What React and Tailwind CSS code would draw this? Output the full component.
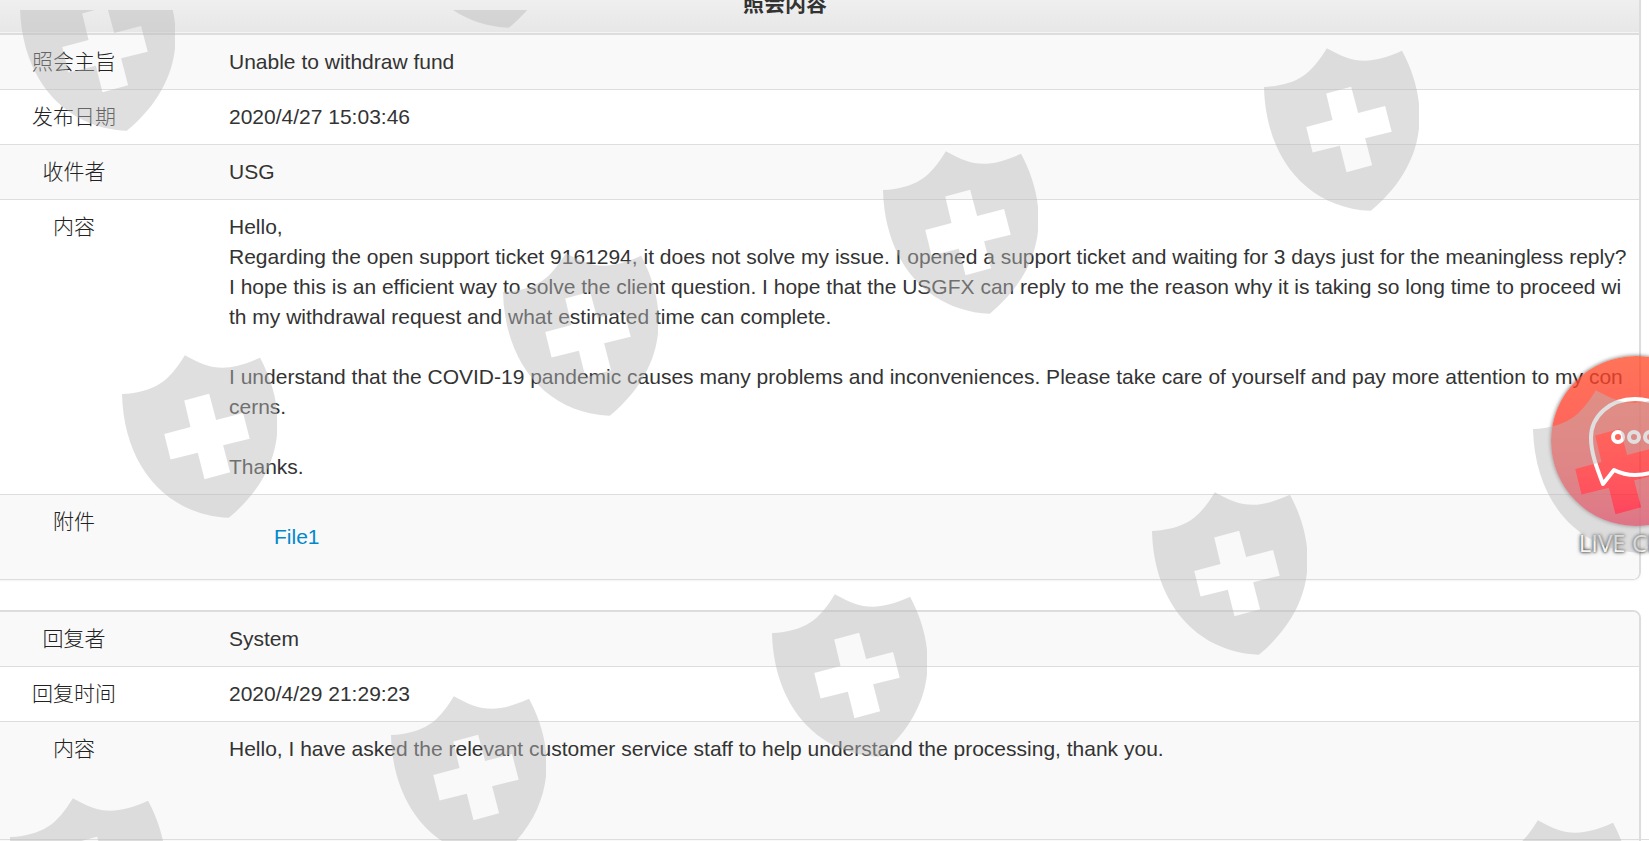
const ticketRows = [
  { label: '照会主旨', value: 'Unable to withdraw fund' },
  { label: '发布日期', value: '2020/4/27 15:03:46' },
  { label: '收件者', value: 'USG' },
  {
    label: '内容',
    value: `Hello,
Regarding the open support ticket 9161294, it does not solve my issue. I opened a support ticket and waiting for 3 days just for the meaningless reply? I hope this is an efficient way to solve the client question. I hope that the USGFX can reply to me the reason why it is taking so long time to proceed with my withdrawal request and what estimated time can complete.

I understand that the COVID-19 pandemic causes many problems and inconveniences. Please take care of yourself and pay more attention to my concerns.

Thanks.`,
  },
  { label: '附件', files: ['File1'] },
]

const replyRows = [
  { label: '回复者', value: 'System' },
  { label: '回复时间', value: '2020/4/29 21:29:23' },
  {
    label: '内容',
    value: 'Hello, I have asked the relevant customer service staff to help understand the processing, thank you.',
    tall: true,
  },
]

// shields are pinned on a slanted grid over the whole page
const shields = [
  'left-[20px] top-[-42px]',
  'left-[402px] top-[-145px]',
  'left-[1264px] top-[38px]',
  'left-[883px] top-[141px]',
  'left-[503px] top-[243px]',
  'left-[122px] top-[345px]',
  'left-[1533px] top-[380px]',
  'left-[1152px] top-[482px]',
  'left-[772px] top-[584px]',
  'left-[391px] top-[686px]',
  'left-[10px] top-[788px]',
  'left-[1475px] top-[810px]',
]

export default function App() {
  return (
    <div className="relative h-screen overflow-hidden bg-white text-[21px] leading-[30px] text-[#333] font-['Liberation_Sans','Noto_Sans_CJK_SC',sans-serif]">
      <main className="-ml-[71px] -mt-[21px] mr-2 flex flex-col gap-[30px]">
        <TicketTable title="照会内容" rows={ticketRows} />
        <TicketTable rows={replyRows} />
      </main>
      <hr className="absolute inset-x-0 bottom-px border-[#ddd]" />
      <LiveChat />
      <Watermark />
    </div>
  )
}

function TicketTable({ title, rows }) {
  return (
    <div className="overflow-hidden rounded-lg border-2 border-b border-[#ddd] shadow-xs">
      <table className="w-full table-fixed">
        <colgroup>
          <col className="w-[286px]" />
          <col />
        </colgroup>
        {title && (
          <thead>
            <tr className="border-b-2 border-[#ddd] bg-linear-to-b from-[#f4f4f4] to-[#e7e7e7]">
              <th colSpan={2} className="px-3 pb-[14px] pt-2 text-center font-bold">{title}</th>
            </tr>
          </thead>
        )}
        <tbody>
          {rows.map((r) => (
            <tr key={r.label} className="border-b border-[#ddd] align-top odd:bg-[#f9f9f9] last:border-b-0">
              <th scope="row" className="p-3 text-center font-light text-[#222]">{r.label}</th>
              <td className={r.tall ? 'break-all whitespace-pre-wrap p-3 pb-24' : 'break-all whitespace-pre-wrap p-3'}>
                {r.files ? <FileList files={r.files} /> : r.value}
              </td>
            </tr>
          ))}
        </tbody>
      </table>
    </div>
  )
}

function FileList({ files }) {
  return (
    <ul className="my-[15px] ml-[45px]">
      {files.map((f) => (
        <li key={f}>
          <a href="#" className="text-[#08c]">{f}</a>
        </li>
      ))}
    </ul>
  )
}

function LiveChat() {
  return (
    <button type="button" className="absolute -right-[72px] top-[356px] flex w-[170px] flex-col items-center">
      <span className="flex size-[170px] items-center justify-center rounded-full bg-linear-to-b from-[#ff4a26]/77 to-[#ff0030]/77 shadow-[0_0_4px_rgba(0,0,0,0.6)]">
        <svg viewBox="0 0 96 92" className="h-[92px] w-24" fill="none" stroke="#fff">
          <path d="M47 4C22 4 3 21 3 43C3 57 8 71 15 89L26 75C32 78 39 80 47 80C72 80 91 64 91 42C91 21 72 4 47 4Z" strokeWidth="4" strokeLinejoin="round" />
          <circle cx="30" cy="42" r="5" strokeWidth="4" />
          <circle cx="46" cy="42" r="5" strokeWidth="4" />
          <circle cx="62" cy="42" r="5" strokeWidth="4" />
        </svg>
      </span>
      <span className="whitespace-nowrap font-['Open_Sans',sans-serif] text-2xl leading-[34px] text-[#f4f4f4] [text-shadow:0_0_4px_#444,0_0_3px_#666,0_0_2px_#888]">LIVE CHAT</span>
    </button>
  )
}

function Watermark() {
  return (
    <div aria-hidden="true" className="pointer-events-none absolute inset-x-0 bottom-0 top-2.5 overflow-hidden">
      {shields.map((pos) => (
        <svg key={pos} viewBox="0 0 466 489" className={`${pos} absolute h-[163px] w-[155px] fill-[#bababa] opacity-45`}>
          <path
            fillRule="evenodd"
            d="M0 117C100 110 140 80 189 0C265 42 310 55 415 8C486 140 512 330 321 489C130 480 5 330 0 117ZM187 136L206 216L127 237L146 314L228 293L248 373L325 352L304 271L384 251L364 174L283 195L262 116Z"
          />
        </svg>
      ))}
    </div>
  )
}
